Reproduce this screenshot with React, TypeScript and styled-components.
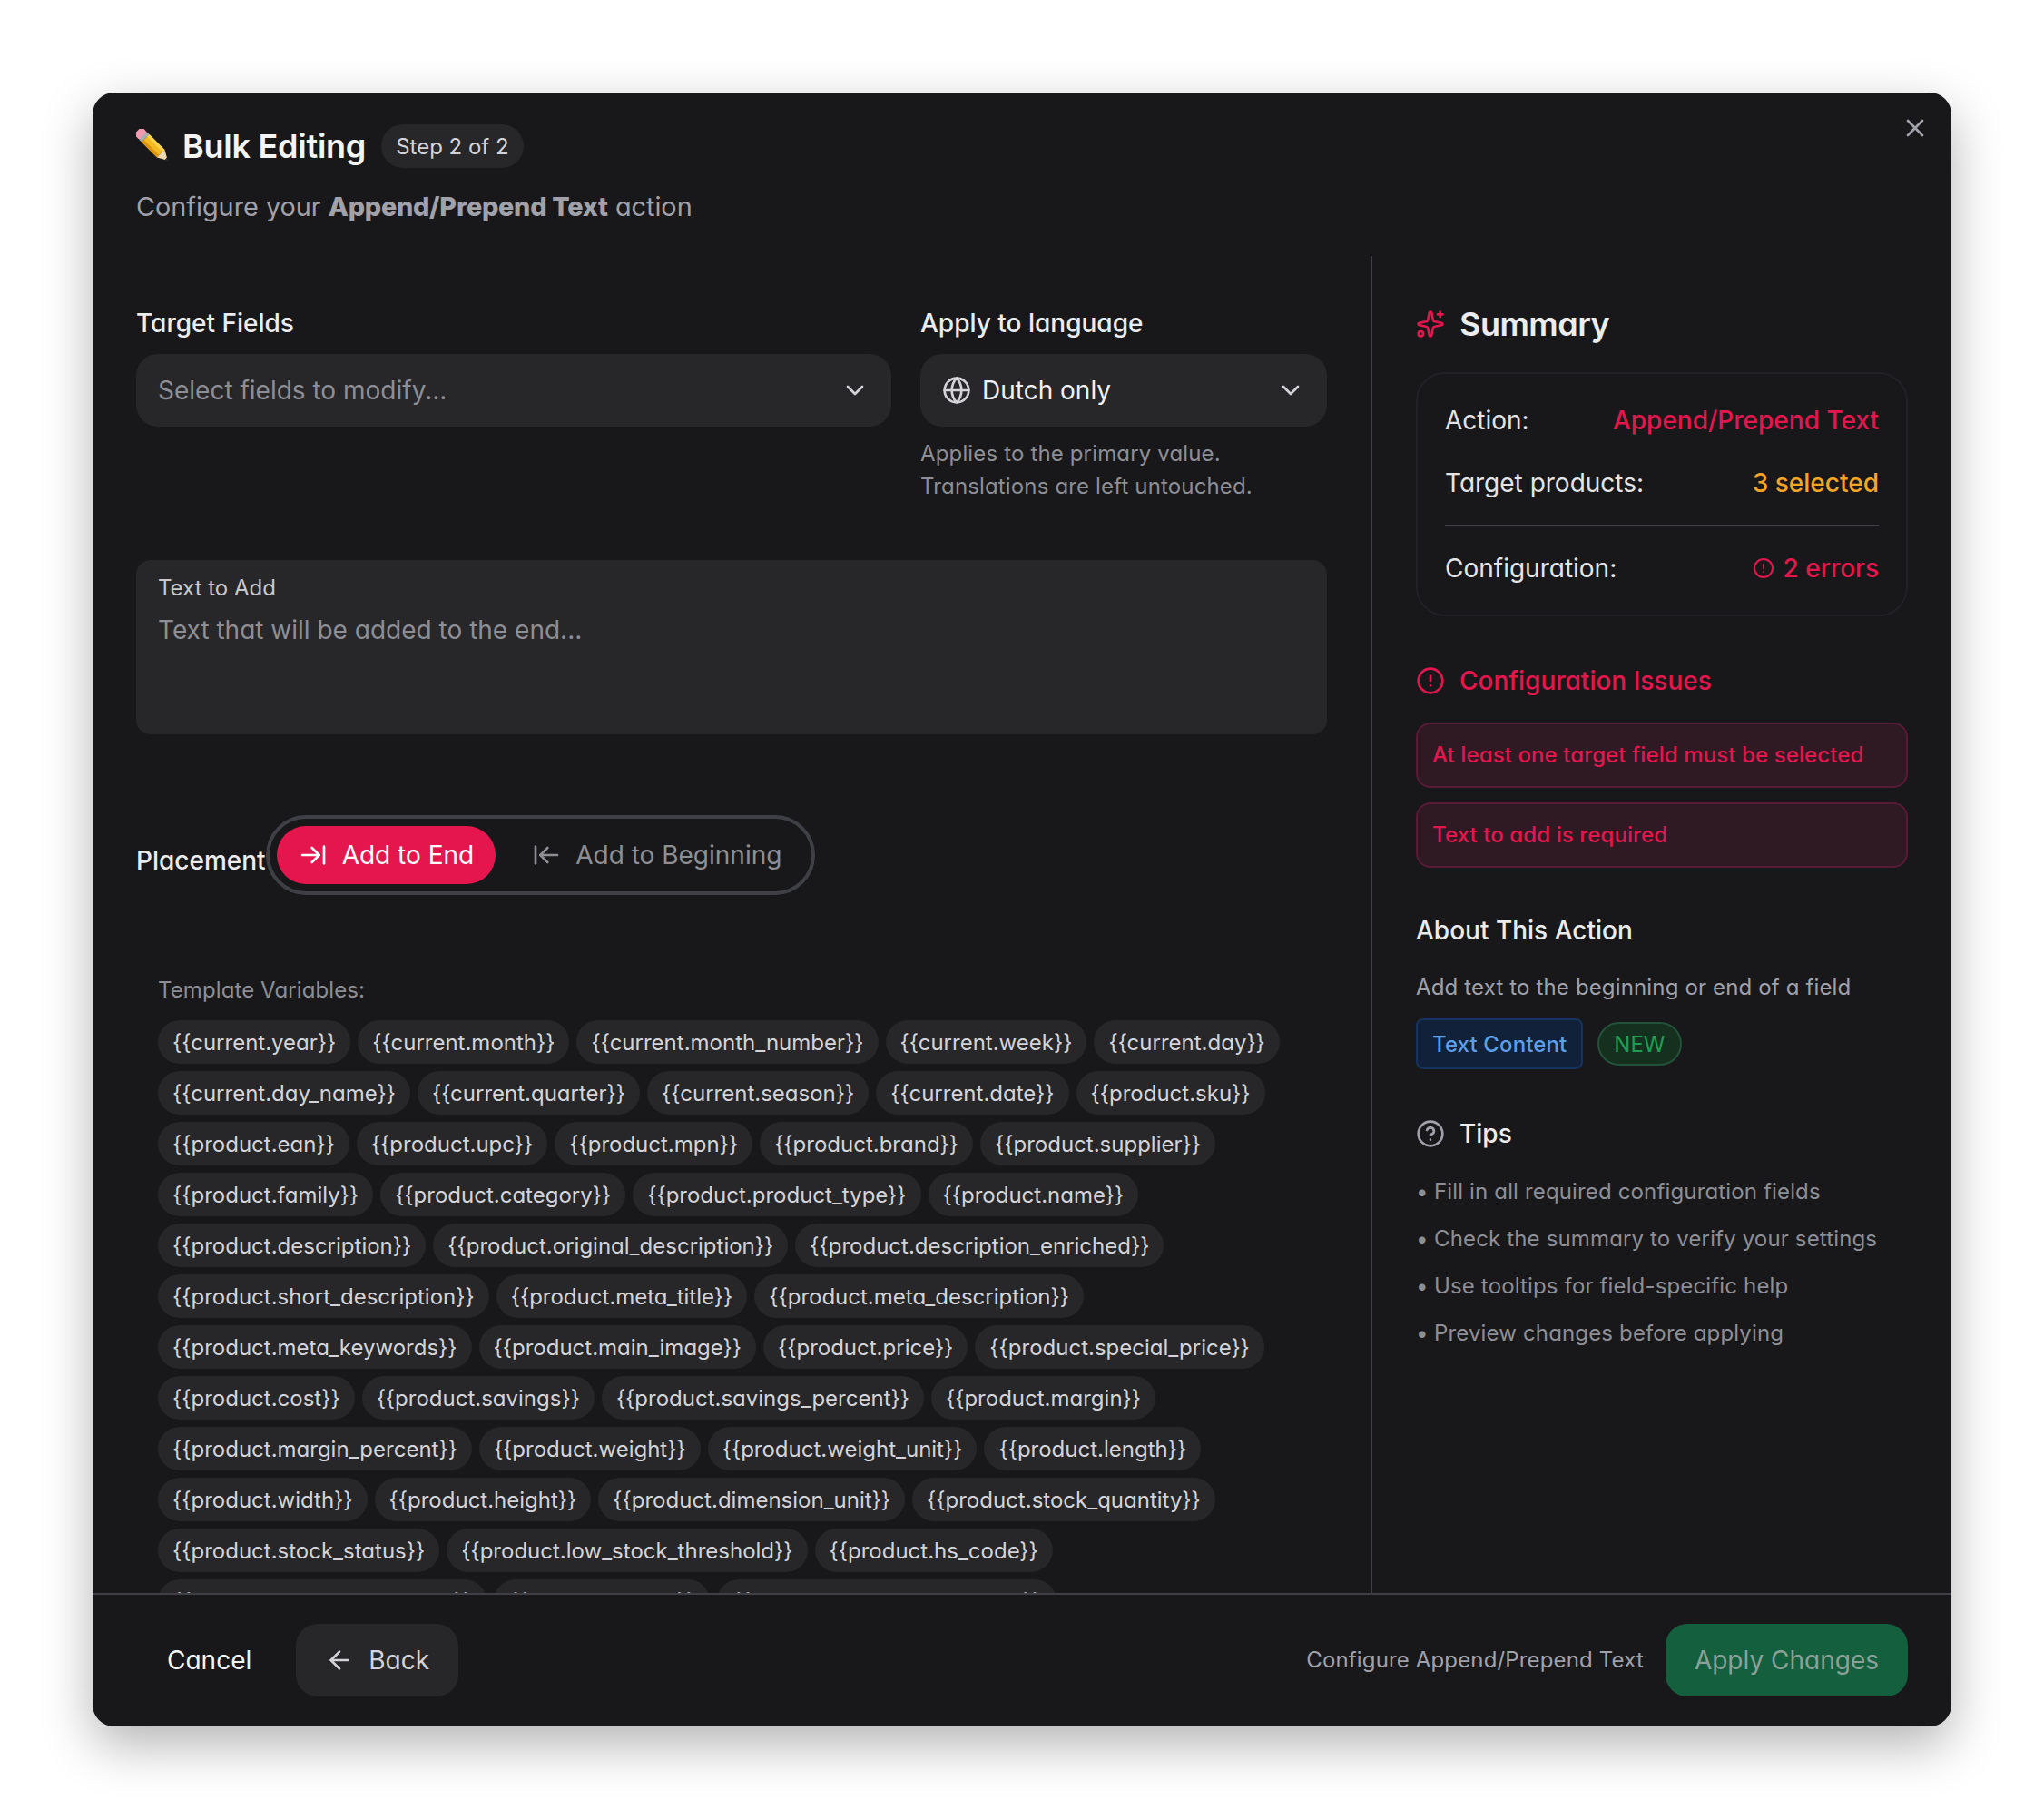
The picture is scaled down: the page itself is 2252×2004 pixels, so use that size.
import styled, { createGlobalStyle } from 'styled-components';
import {
  ArrowLeft,
  ArrowLeftToLine,
  ArrowRightToLine,
  ChevronDown,
  CircleAlert,
  CircleHelp,
  Globe,
  Sparkles,
  X,
} from 'lucide-react';

const VARIABLES = [
  'current.year', 'current.month', 'current.month_number', 'current.week', 'current.day',
  'current.day_name', 'current.quarter', 'current.season', 'current.date', 'product.sku',
  'product.ean', 'product.upc', 'product.mpn', 'product.brand', 'product.supplier',
  'product.family', 'product.category', 'product.product_type', 'product.name',
  'product.description', 'product.original_description', 'product.description_enriched',
  'product.short_description', 'product.meta_title', 'product.meta_description',
  'product.meta_keywords', 'product.main_image', 'product.price', 'product.special_price',
  'product.cost', 'product.savings', 'product.savings_percent', 'product.margin',
  'product.margin_percent', 'product.weight', 'product.weight_unit', 'product.length',
  'product.width', 'product.height', 'product.dimension_unit', 'product.stock_quantity',
  'product.stock_status', 'product.low_stock_threshold', 'product.hs_code',
  'product.country_of_origin', 'product.status', 'product.manufacturer_sku',
];

const TIPS = [
  'Fill in all required configuration fields',
  'Check the summary to verify your settings',
  'Use tooltips for field-specific help',
  'Preview changes before applying',
];

const GlobalStyle = createGlobalStyle`
  * { box-sizing: border-box; }
  html, body { margin: 0; background: #fff; }
  body {
    font-family: Inter, 'Liberation Sans', sans-serif;
    font-feature-settings: 'cv11' 1;
  }
`;

const Page = styled.div`
  width: 2252px;
  height: 2004px;
  padding: 102px;
`;

const Modal = styled.div`
  position: relative;
  width: 2048px;
  height: 1800px;
  display: flex;
  flex-direction: column;
  background: #18181b;
  border-radius: 24px;
  box-shadow: 0 20px 56px rgba(0, 0, 0, 0.3);
  overflow: hidden;
`;

const CloseButton = styled.div`
  position: absolute;
  top: 23px;
  right: 24px;
  color: #a1a1aa;
  display: flex;
`;

const Header = styled.header`
  height: 180px;
  flex: none;
  padding: 35px 48px 0;
`;

const TitleRow = styled.div`
  display: flex;
  align-items: center;
  height: 48px;
`;

const PencilIcon = styled.svg`
  width: 38px;
  height: 38px;
  margin-right: 13px;
  flex: none;
`;

const Title = styled.h1`
  margin: 0 17px 0 0;
  font-size: 36px;
  line-height: 48px;
  font-weight: 600;
  letter-spacing: -0.25px;
  color: #f4f4f5;
`;

const StepPill = styled.span`
  height: 48px;
  padding: 0 16px;
  display: flex;
  align-items: center;
  border-radius: 24px;
  background: #27272a;
  color: #d4d4d8;
  font-size: 24px;
`;

const Subtitle = styled.p`
  margin: 23px 0 0;
  font-size: 28.8px;
  line-height: 40px;
  color: #a1a1aa;
  b { font-weight: 800; letter-spacing: -0.25px; }
`;

const Body = styled.div`
  flex: 1;
  min-height: 0;
  display: flex;
`;

const MainColumn = styled.div`
  width: 1410px;
  flex: none;
  padding: 54px 48px 0;
  border-right: 2px solid #3f3f46;
  overflow: hidden;
`;

const FieldGrid = styled.div`
  display: grid;
  grid-template-columns: 832px 448px;
  column-gap: 32px;
`;

const FieldLabel = styled.label`
  display: block;
  margin-bottom: 14px;
  font-size: 28px;
  line-height: 40px;
  font-weight: 500;
  color: #ececee;
`;

const Select = styled.div`
  height: 80px;
  padding: 0 24px;
  display: flex;
  align-items: center;
  gap: 12px;
  background: #27272a;
  border-radius: 24px;
  color: #e4e4e7;
  svg { flex: none; color: #d4d4d8; }
`;

const SelectText = styled.span<{ $placeholder?: boolean }>`
  flex: 1;
  font-size: 28px;
  color: ${(p) => (p.$placeholder ? '#8e8e95' : '#f1f1f3')};
`;

const HelpText = styled.p`
  margin: 12px 0 0;
  font-size: 24px;
  line-height: 36px;
  letter-spacing: 0.15px;
  color: #8e8e95;
`;

const TextBox = styled.div`
  height: 192px;
  margin-top: 63px;
  padding: 13px 24px;
  background: #27272a;
  border-radius: 16px;
`;

const TextBoxLabel = styled.div`
  font-size: 24px;
  line-height: 36px;
  color: #c8c8cd;
`;

const TextBoxPlaceholder = styled.div`
  margin-top: 10px;
  font-size: 28px;
  line-height: 36px;
  color: #8e8e95;
`;

const PlacementRow = styled.div`
  margin-top: 89px;
  display: flex;
  align-items: center;
`;

const PlacementLabel = styled.span`
  padding-top: 12px;
  font-size: 28px;
  line-height: 40px;
  font-weight: 500;
  color: #ececee;
`;

const Segments = styled.div`
  height: 88px;
  padding: 8px 9px 8px 8px;
  display: flex;
  align-items: center;
  gap: 16px;
  border: 4px solid #3f3f46;
  border-radius: 44px;
`;

const Segment = styled.div<{ $active?: boolean }>`
  height: 64px;
  padding: 0 24px;
  display: flex;
  align-items: center;
  gap: 16px;
  border-radius: 32px;
  font-size: 28px;
  background: ${(p) => (p.$active ? '#e5164e' : 'transparent')};
  color: ${(p) => (p.$active ? '#ffffff' : '#8e8e95')};
`;

const VariablesBlock = styled.div`
  margin-top: 87px;
  padding: 0 24px;
`;

const VariablesLabel = styled.div`
  font-size: 24px;
  line-height: 36px;
  letter-spacing: 0.1px;
  color: #8e8e95;
`;

const ChipList = styled.div`
  margin-top: 15px;
  display: flex;
  flex-wrap: wrap;
  gap: 8px;
`;

const Chip = styled.span`
  height: 48px;
  padding: 0 16px;
  display: flex;
  align-items: center;
  background: #27272a;
  border-radius: 24px;
  font-size: 24px;
  color: #d4d4d8;
`;

const SideColumn = styled.aside`
  flex: 1;
  padding: 53px 48px 0;
`;

const SectionHeading = styled.div<{ $tone?: 'danger' | 'plain' }>`
  display: flex;
  align-items: center;
  gap: 16px;
  color: ${(p) => (p.$tone === 'danger' ? '#e5164e' : '#ececee')};
  font-weight: 500;
  font-size: 28px;
  line-height: 40px;
  svg { flex: none; }
`;

const SummaryHeading = styled(SectionHeading)`
  font-size: 36px;
  font-weight: 600;
  line-height: 44px;
  letter-spacing: -0.5px;
  svg { color: #e5164e; }
`;

const SummaryCard = styled.div`
  margin-top: 31px;
  height: 269px;
  padding: 33px 30px 0;
  border: 2px solid #222226;
  border-radius: 32px;
`;

const SummaryRow = styled.div`
  height: 36px;
  display: flex;
  align-items: center;
  justify-content: space-between;
  font-size: 28px;
  color: #e4e4e7;
  & + & { margin-top: 33px; }
`;

const SummaryValue = styled.span<{ $color: string }>`
  display: flex;
  align-items: center;
  gap: 10px;
  font-weight: 500;
  color: ${(p) => p.$color};
`;

const SummaryDivider = styled.div`
  height: 2px;
  margin: 28px 0;
  background: #3f3f46;
`;

const IssuesSection = styled.section`
  margin-top: 51px;
`;

const IssueList = styled.div`
  margin-top: 26px;
  display: flex;
  flex-direction: column;
  gap: 16px;
`;

const IssueBox = styled.div`
  height: 72px;
  padding: 0 16px 2px;
  display: flex;
  align-items: center;
  background: #2f1923;
  border: 2px solid #5a1a35;
  border-radius: 16px;
  font-size: 24px;
  font-weight: 500;
  letter-spacing: 0.1px;
  color: #e5164e;
`;

const AboutHeading = styled.div`
  margin-top: 49px;
  font-size: 28px;
  line-height: 40px;
  font-weight: 500;
  color: #ececee;
`;

const AboutText = styled.p`
  margin: 25px 0 0;
  font-size: 24px;
  line-height: 36px;
  letter-spacing: 0.15px;
  color: #a1a1aa;
`;

const BadgeRow = styled.div`
  margin-top: 16px;
  display: flex;
  align-items: center;
  gap: 16px;
`;

const CategoryBadge = styled.span`
  height: 56px;
  padding: 0 16px;
  display: flex;
  align-items: center;
  background: #11213a;
  border: 2px solid #15335c;
  border-radius: 8px;
  color: #5c9fe8;
  font-size: 24px;
  font-weight: 500;
  letter-spacing: 0.12px;
`;

const NewBadge = styled.span`
  height: 48px;
  padding: 0 16px;
  display: flex;
  align-items: center;
  background: #16301f;
  border: 2px solid #235139;
  border-radius: 24px;
  color: #1f9d55;
  font-size: 24px;
`;

const TipsSection = styled.section`
  margin-top: 51px;
  svg { color: #a1a1aa; }
`;

const TipList = styled.ul`
  margin: 17px 0 0;
  padding: 0;
  list-style: none;
`;

const Tip = styled.li`
  height: 52px;
  display: flex;
  align-items: center;
  font-size: 24px;
  letter-spacing: 0.15px;
  color: #8e8e95;
  &::before {
    content: '•';
    width: 20px;
    flex: none;
  }
`;

const Footer = styled.footer`
  height: 147px;
  flex: none;
  padding: 0 48px 2px;
  display: flex;
  align-items: center;
  border-top: 2px solid #3f3f46;
`;

const CancelButton = styled.div`
  padding: 0 34px;
  font-size: 28px;
  color: #f4f4f5;
`;

const BackButton = styled.div`
  height: 80px;
  margin-left: 15px;
  padding: 0 32px;
  display: flex;
  align-items: center;
  gap: 16px;
  background: #27272a;
  border-radius: 24px;
  font-size: 28px;
  color: #d4d4d8;
`;

const FooterHint = styled.span`
  margin-left: auto;
  margin-right: 24px;
  font-size: 24px;
  letter-spacing: 0.15px;
  color: #a1a1aa;
`;

const ApplyButton = styled.div`
  height: 80px;
  padding: 0 32px;
  display: flex;
  align-items: center;
  background: #135f3e;
  border-radius: 24px;
  font-size: 28px;
  color: #8ba197;
`;

const App = () => {
  return (
    <>
      <GlobalStyle />
      <Page>
        <Modal>
          <CloseButton>
            <X size={32} strokeWidth={2} />
          </CloseButton>
          <Header>
            <TitleRow>
              <PencilIcon viewBox="0 0 38 38">
                <g transform="translate(6 6) rotate(45)">
                  <rect x="-6" y="-6" width="10" height="12" rx="4" fill="#f39ab0" />
                  <rect x="2" y="-6" width="4" height="12" fill="#a9aeb6" />
                  <rect x="6" y="-6" width="24" height="12" fill="#f5b921" />
                  <rect x="6" y="-6" width="24" height="3.5" fill="#fbd34a" />
                  <rect x="6" y="2.5" width="24" height="3.5" fill="#dc9512" />
                  <polygon points="30,-6 30,6 38,1.5 38,-1.5" fill="#eed9b0" />
                  <polygon points="38,-1.5 38,1.5 41,0" fill="#33333a" />
                </g>
              </PencilIcon>
              <Title>Bulk Editing</Title>
              <StepPill>Step 2 of 2</StepPill>
            </TitleRow>
            <Subtitle>
              Configure your <b>Append/Prepend Text</b> action
            </Subtitle>
          </Header>
          <Body>
            <MainColumn>
              <FieldGrid>
                <div>
                  <FieldLabel>Target Fields</FieldLabel>
                  <Select>
                    <SelectText $placeholder>Select fields to modify...</SelectText>
                    <ChevronDown size={32} strokeWidth={2} />
                  </Select>
                </div>
                <div>
                  <FieldLabel>Apply to language</FieldLabel>
                  <Select>
                    <Globe size={32} strokeWidth={2} />
                    <SelectText>Dutch only</SelectText>
                    <ChevronDown size={32} strokeWidth={2} />
                  </Select>
                  <HelpText>
                    Applies to the primary value.
                    <br />
                    Translations are left untouched.
                  </HelpText>
                </div>
              </FieldGrid>
              <TextBox>
                <TextBoxLabel>Text to Add</TextBoxLabel>
                <TextBoxPlaceholder>Text that will be added to the end...</TextBoxPlaceholder>
              </TextBox>
              <PlacementRow>
                <PlacementLabel>Placement</PlacementLabel>
                <Segments>
                  <Segment $active>
                    <ArrowRightToLine size={32} strokeWidth={2} />
                    Add to End
                  </Segment>
                  <Segment>
                    <ArrowLeftToLine size={32} strokeWidth={2} />
                    Add to Beginning
                  </Segment>
                </Segments>
              </PlacementRow>
              <VariablesBlock>
                <VariablesLabel>Template Variables:</VariablesLabel>
                <ChipList>
                  {VARIABLES.map((name) => (
                    <Chip key={name}>{`{{${name}}}`}</Chip>
                  ))}
                </ChipList>
              </VariablesBlock>
            </MainColumn>
            <SideColumn>
              <SummaryHeading>
                <Sparkles size={32} strokeWidth={2} />
                Summary
              </SummaryHeading>
              <SummaryCard>
                <SummaryRow>
                  <span>Action:</span>
                  <SummaryValue $color="#e5164e">Append/Prepend Text</SummaryValue>
                </SummaryRow>
                <SummaryRow>
                  <span>Target products:</span>
                  <SummaryValue $color="#f5a524">3 selected</SummaryValue>
                </SummaryRow>
                <SummaryDivider />
                <SummaryRow>
                  <span>Configuration:</span>
                  <SummaryValue $color="#e5164e">
                    <CircleAlert size={24} strokeWidth={2} />2 errors
                  </SummaryValue>
                </SummaryRow>
              </SummaryCard>
              <IssuesSection>
                <SectionHeading $tone="danger">
                  <CircleAlert size={32} strokeWidth={2} />
                  Configuration Issues
                </SectionHeading>
                <IssueList>
                  <IssueBox>At least one target field must be selected</IssueBox>
                  <IssueBox>Text to add is required</IssueBox>
                </IssueList>
              </IssuesSection>
              <AboutHeading>About This Action</AboutHeading>
              <AboutText>Add text to the beginning or end of a field</AboutText>
              <BadgeRow>
                <CategoryBadge>Text Content</CategoryBadge>
                <NewBadge>NEW</NewBadge>
              </BadgeRow>
              <TipsSection>
                <SectionHeading>
                  <CircleHelp size={32} strokeWidth={2} />
                  Tips
                </SectionHeading>
                <TipList>
                  {TIPS.map((tip) => (
                    <Tip key={tip}>{tip}</Tip>
                  ))}
                </TipList>
              </TipsSection>
            </SideColumn>
          </Body>
          <Footer>
            <CancelButton>Cancel</CancelButton>
            <BackButton>
              <ArrowLeft size={32} strokeWidth={2} />
              Back
            </BackButton>
            <FooterHint>Configure Append/Prepend Text</FooterHint>
            <ApplyButton>Apply Changes</ApplyButton>
          </Footer>
        </Modal>
      </Page>
    </>
  );
};

export default App;
